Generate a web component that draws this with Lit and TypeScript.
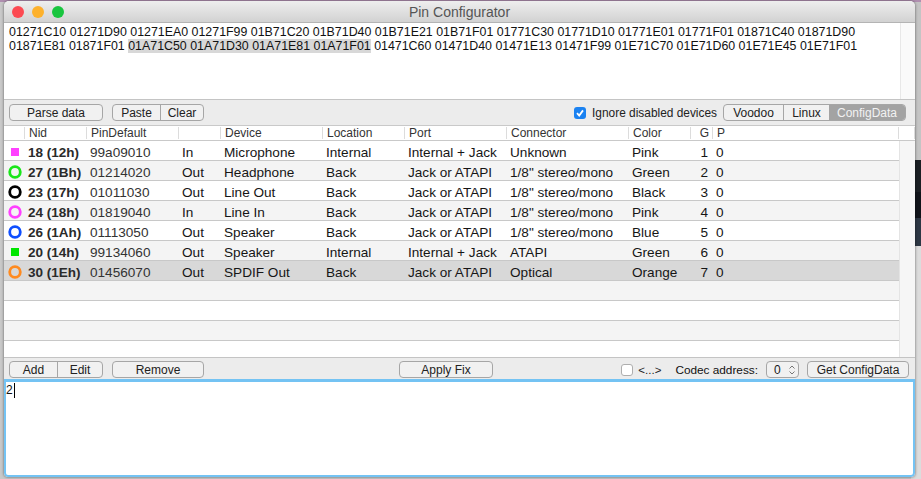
import { LitElement, html, css, svg } from 'lit'
import { customElement } from 'lit/decorators.js'

const HEX_LINE_1 = '01271C10 01271D90 01271EA0 01271F99 01B71C20 01B71D40 01B71E21 01B71F01 01771C30 01771D10 01771E01 01771F01 01871C40 01871D90'
const HEX_BEFORE = '01871E81 01871F01 '
const HEX_SELECTED = '01A71C50 01A71D30 01A71E81 01A71F01'
const HEX_AFTER = ' 01471C60 01471D40 01471E13 01471F99 01E71C70 01E71D60 01E71E45 01E71F01'

const HEADERS = ['', 'Nid', 'PinDefault', '', 'Device', 'Location', 'Port', 'Connector', 'Color', 'G', 'P', '']

interface Pin {
  color: string
  shape: 'ring' | 'square'
  nid: string
  pin: string
  dir: string
  device: string
  location: string
  port: string
  connector: string
  colorName: string
  g: string
}

const PINS: Pin[] = [
  { color: '#ff40ff', shape: 'square', nid: '18 (12h)', pin: '99a09010', dir: 'In', device: 'Microphone', location: 'Internal', port: 'Internal + Jack', connector: 'Unknown', colorName: 'Pink', g: '1' },
  { color: '#19e619', shape: 'ring', nid: '27 (1Bh)', pin: '01214020', dir: 'Out', device: 'Headphone', location: 'Back', port: 'Jack or ATAPI', connector: '1/8" stereo/mono', colorName: 'Green', g: '2' },
  { color: '#000000', shape: 'ring', nid: '23 (17h)', pin: '01011030', dir: 'Out', device: 'Line Out', location: 'Back', port: 'Jack or ATAPI', connector: '1/8" stereo/mono', colorName: 'Black', g: '3' },
  { color: '#ff40ff', shape: 'ring', nid: '24 (18h)', pin: '01819040', dir: 'In', device: 'Line In', location: 'Back', port: 'Jack or ATAPI', connector: '1/8" stereo/mono', colorName: 'Pink', g: '4' },
  { color: '#0f4fff', shape: 'ring', nid: '26 (1Ah)', pin: '01113050', dir: 'Out', device: 'Speaker', location: 'Back', port: 'Jack or ATAPI', connector: '1/8" stereo/mono', colorName: 'Blue', g: '5' },
  { color: '#00e600', shape: 'square', nid: '20 (14h)', pin: '99134060', dir: 'Out', device: 'Speaker', location: 'Internal', port: 'Internal + Jack', connector: 'ATAPI', colorName: 'Green', g: '6' },
  { color: '#ff8a1f', shape: 'ring', nid: '30 (1Eh)', pin: '01456070', dir: 'Out', device: 'SPDIF Out', location: 'Back', port: 'Jack or ATAPI', connector: 'Optical', colorName: 'Orange', g: '7' },
]

@customElement('app-root')
export class AppRoot extends LitElement {
  static styles = css`
    :host {
      display: block;
      width: 921px;
      height: 479px;
      overflow: hidden;
      padding: 1px 6px 2px 4px;
      box-sizing: border-box;
      /* blurred desktop showing around the window */
      background:
        linear-gradient(to bottom, #b08fb0 0, #b08fb0 2px, transparent 2px),
        linear-gradient(to bottom,
          #c4c4c4 0, #c4c4c4 160px,
          #1b1f24 160px, #1b1f24 192px,
          #11141a 192px, #11141a 218px,
          #2d3744 218px, #2d3744 246px,
          #dcdcdc 246px, #dcdcdc 100%) right top / 10px 100% no-repeat,
        #c9c9c9;
      font-family: "Liberation Sans", Arial, sans-serif;
      color: #1a1a1a;
    }

    .window {
      height: 476px;
      display: flex;
      flex-direction: column;
      background: #ececec;
      border-radius: 5px 5px 4px 4px;
      overflow: hidden;
      box-shadow: 0 0 3px rgba(0, 0, 0, 0.55);
    }

    .titlebar {
      flex: none;
      height: 22px;
      box-sizing: border-box;
      display: flex;
      align-items: center;
      justify-content: center;
      position: relative;
      background: linear-gradient(to bottom, #eeeeee, #d2d2d2);
      border-bottom: 1px solid #b4b4b4;
      font-size: 14px;
      color: #555;
    }

    .lights {
      position: absolute;
      left: 8px;
      top: 5px;
      display: flex;
      gap: 8px;
    }

    .light {
      width: 12px;
      height: 12px;
      border-radius: 50%;
    }
    .light.red { background: #fc4a52; }
    .light.yellow { background: #fdb12c; }
    .light.green { background: #19c53f; }

    .hex {
      flex: none;
      height: 77px;
      box-sizing: border-box;
      display: flex;
      background: #fff;
      border-bottom: 1px solid #c4c4c4;
    }

    .hex-text {
      flex: 1;
      min-width: 0;
      padding: 2px 5px;
      font-size: 12.4px;
      line-height: 14px;
      color: #111;
      white-space: nowrap;
    }

    .hex-text mark {
      background: #d8d8d8;
      color: inherit;
    }

    .hex-track {
      flex: none;
      width: 14px;
      background: #fafafa;
      border-left: 1px solid #e8e8e8;
    }

    .toolbar {
      flex: none;
      display: flex;
      align-items: center;
      padding: 0 9px 0 5px;
      font-size: 12.5px;
    }

    .toolbar.top {
      height: 25px;
    }

    .toolbar.bottom {
      height: 22px;
      padding-top: 2px;
      padding-right: 6px;
      border-top: 1px solid #c4c4c4;
      box-sizing: border-box;
    }

    .btn-group {
      display: flex;
      height: 15px;
      border: 1px solid #a6a6a6;
      border-radius: 4px;
      background: #f1f1f1;
      overflow: hidden;
    }

    .btn-group span {
      display: flex;
      align-items: center;
      justify-content: center;
      box-sizing: border-box;
      font-size: 12px;
      color: #222;
      border-left: 1px solid #a6a6a6;
    }

    .btn-group span:first-child {
      border-left: none;
    }

    .btn-group span.active {
      background: #a3a3a3;
      color: #f2f2f2;
      border-left: none;
    }

    .spacer {
      flex: 1;
    }

    .check {
      width: 12px;
      height: 12px;
      border-radius: 3px;
      box-sizing: border-box;
      display: flex;
      align-items: center;
      justify-content: center;
    }

    .check.on {
      background: #1b82f1;
    }

    .check.off {
      background: #fff;
      border: 1px solid #aeaeae;
    }

    .check-label {
      color: #222;
      font-size: 11.9px;
      margin-left: 5px;
    }

    .check-label.wide {
      margin-left: 6px;
    }

    .check-label.small {
      font-size: 11.5px;
    }

    .check-label.codec {
      margin-left: 14px;
      font-size: 11.8px;
      color: #111;
    }

    .table {
      flex: 1;
      display: flex;
      flex-direction: column;
      min-height: 0;
      background: #f6f6f6;
    }

    .rows {
      flex: 1;
      min-height: 0;
      margin-right: 15px;
      border-right: 1px solid #e4e4e4;
    }

    .row {
      display: grid;
      grid-template-columns: 20px 62px 92px 42px 102px 82px 102px 122px 62px 22px 1fr;
      align-items: center;
      height: 20px;
      box-sizing: border-box;
      padding-top: 3px;
      border-bottom: 1px solid #c8c8c8;
      font-size: 13.6px;
      color: #161616;
      background: #fff;
    }

    .row.alt {
      background: #f4f4f4;
    }

    .row.selected {
      background: #d8d8d8;
    }

    .row.last {
      height: 16px;
      border-bottom: none;
    }

    .head {
      flex: none;
      display: grid;
      grid-template-columns: 21px 62px 92px 42px 102px 82px 102px 122px 62px 22px 186px 1fr;
      height: 16px;
      align-items: center;
      box-sizing: border-box;
      background: #fff;
      border-top: 1px solid #c9c9c9;
      border-bottom: 1px solid #c9c9c9;
      font-size: 12px;
      color: #333;
    }

    .head span {
      height: 12px;
      line-height: 12px;
      padding-left: 4px;
      white-space: nowrap;
      border-right: 1px solid #dcdcdc;
    }

    .head span.num {
      padding-left: 0;
      padding-right: 3px;
      text-align: right;
    }

    .cell {
      padding-left: 4px;
      white-space: nowrap;
    }

    .cell.icon {
      padding-left: 4px;
      display: flex;
      align-items: center;
      height: 14px;
    }

    .cell.nid {
      font-weight: 700;
      font-size: 13.5px;
      color: #2a2a2a;
    }

    .cell.dim {
      color: #333;
    }

    .cell.g {
      text-align: right;
      padding-left: 0;
      padding-right: 4px;
    }

    .editor {
      flex: none;
      height: 98px;
      box-sizing: border-box;
      background: #fff;
      border: 2px solid #74c3f3;
      border-top-width: 3px;
      border-radius: 0 0 4px 4px;
      font-size: 12px;
      line-height: 14px;
      padding: 1px 0 0 0;
      color: #111;
    }

    .editor i {
      display: inline-block;
      width: 1px;
      height: 15px;
      background: #000;
      vertical-align: top;
      margin-left: 1px;
    }

    .stepper {
      display: flex;
      align-items: center;
      justify-content: space-between;
      width: 22px;
      height: 15px;
      margin-left: 8px;
      border: 1px solid #a6a6a6;
      border-radius: 4px;
      background: #f1f1f1;
      padding: 0 2px 0 7px;
      font-size: 12px;
    }
  `

  private _icon(p: Pin) {
    return html`<svg width="14" height="14" viewBox="0 0 14 14">
      ${p.shape === 'ring'
        ? svg`<circle cx="7" cy="7" r="5.3" fill="none" stroke=${p.color} stroke-width="2.8"></circle>`
        : svg`<rect x="3" y="3" width="8" height="8" fill=${p.color}></rect>`}
    </svg>`
  }

  private _row(p: Pin, i: number) {
    const cls = i === 6 ? 'row selected' : i % 2 ? 'row alt' : 'row'
    return html`<div class=${cls}>
      <div class="cell icon">${this._icon(p)}</div>
      <div class="cell nid">${p.nid}</div>
      <div class="cell dim">${p.pin}</div>
      <div class="cell">${p.dir}</div>
      <div class="cell">${p.device}</div>
      <div class="cell">${p.location}</div>
      <div class="cell">${p.port}</div>
      <div class="cell">${p.connector}</div>
      <div class="cell">${p.colorName}</div>
      <div class="cell g">${p.g}</div>
      <div class="cell">0</div>
    </div>`
  }

  render() {
    return html`
      <div class="window">
        <div class="titlebar">
          <div class="lights">
            <div class="light red"></div>
            <div class="light yellow"></div>
            <div class="light green"></div>
          </div>
          Pin Configurator
        </div>
        <div class="hex">
          <div class="hex-text">
            <div>${HEX_LINE_1}</div>
            <div>${HEX_BEFORE}<mark>${HEX_SELECTED}</mark>${HEX_AFTER}</div>
          </div>
          <div class="hex-track"></div>
        </div>
        <div class="toolbar top">
          <div class="btn-group"><span style="width:92px">Parse data</span></div>
          <div class="btn-group" style="margin-left:9px">
            <span style="width:47px">Paste</span><span style="width:43px">Clear</span>
          </div>
          <div class="spacer"></div>
          <div class="check on">
            <svg width="10" height="10" viewBox="0 0 10 10"><path d="M2 5.2 L4.2 7.6 L8 2.4" fill="none" stroke="#fff" stroke-width="1.8"></path></svg>
          </div>
          <div class="check-label wide">Ignore disabled devices</div>
          <div class="btn-group" style="margin-left:6px">
            <span style="width:59px">Voodoo</span><span style="width:46px">Linux</span><span class="active" style="width:76px">ConfigData</span>
          </div>
        </div>
        <div class="table">
          <div class="head">
            ${HEADERS.map((h) => html`<span class=${h === 'G' ? 'num' : ''}>${h}</span>`)}
          </div>
          <div class="rows">
            ${PINS.map((p, i) => this._row(p, i))}
            <div class="row alt"></div>
            <div class="row"></div>
            <div class="row alt"></div>
            <div class="row last"></div>
          </div>
        </div>
        <div class="toolbar bottom">
          <div class="btn-group">
            <span style="width:47px">Add</span><span style="width:45px">Edit</span>
          </div>
          <div class="btn-group" style="margin-left:9px"><span style="width:90px">Remove</span></div>
          <div class="btn-group" style="margin-left:195px"><span style="width:92px">Apply Fix</span></div>
          <div class="spacer"></div>
          <div class="check off"></div>
          <div class="check-label small">&lt;...&gt;</div>
          <div class="check-label codec">Codec address:</div>
          <div class="stepper">
            0
            <svg width="8" height="12" viewBox="0 0 8 12"><path d="M1.5 4.5 L4 2 L6.5 4.5 M1.5 7.5 L4 10 L6.5 7.5" fill="none" stroke="#777" stroke-width="1"></path></svg>
          </div>
          <div class="btn-group" style="margin-left:8px"><span style="width:100px">Get ConfigData</span></div>
        </div>
        <div class="editor">2<i></i></div>
      </div>
    `
  }
}

declare global {
  interface HTMLElementTagNameMap {
    'app-root': AppRoot
  }
}
